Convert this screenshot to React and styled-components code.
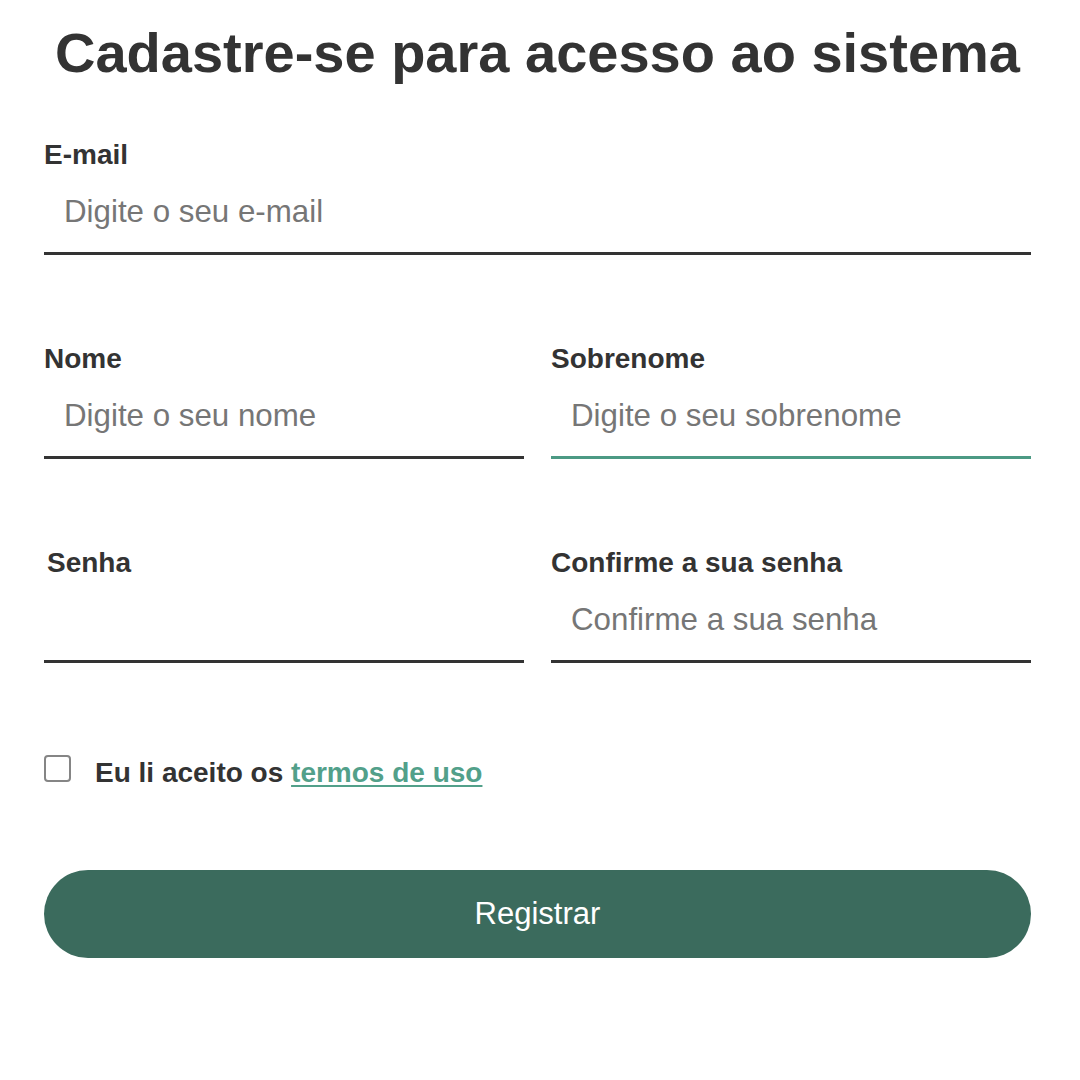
import React from "react";
import styled, { createGlobalStyle } from "styled-components";

const GlobalStyle = createGlobalStyle`
  body {
    margin: 0;
    background: #ffffff;
    font-family: "Liberation Sans", Arial, sans-serif;
  }
`;

const App = () => {
  return (
    <>
      <GlobalStyle />
      <Wrapper>
        <Title>Cadastre-se para acesso ao sistema</Title>
        <Form onSubmit={(e) => e.preventDefault()}>
          <Field>
            <Label htmlFor="email">E-mail</Label>
            <Input id="email" type="email" placeholder="Digite o seu e-mail" />
          </Field>

          <Row>
            <Field>
              <Label htmlFor="nome">Nome</Label>
              <Input id="nome" type="text" placeholder="Digite o seu nome" />
            </Field>
            <Field>
              <Label htmlFor="sobrenome">Sobrenome</Label>
              <Input
                id="sobrenome"
                type="text"
                placeholder="Digite o seu sobrenome"
                $active
              />
            </Field>
          </Row>

          <Row>
            <Field>
              <Label htmlFor="senha" $shift={3}>
                Senha
              </Label>
              <Input id="senha" type="password" />
            </Field>
            <Field>
              <Label htmlFor="confirma">Confirme a sua senha</Label>
              <Input
                id="confirma"
                type="password"
                placeholder="Confirme a sua senha"
              />
            </Field>
          </Row>

          <Terms>
            <Checkbox type="checkbox" id="termos" />
            <TermsText htmlFor="termos">
              Eu li aceito os <TermsLink href="#">termos de uso</TermsLink>
            </TermsText>
          </Terms>

          <Button type="submit">Registrar</Button>
        </Form>
      </Wrapper>
    </>
  );
};

const Wrapper = styled.main`
  width: 987px;
  margin-left: 44px;
  padding-top: 20px;
  color: #333333;
`;

const Title = styled.h1`
  margin: 0 0 53px;
  font-size: 56px;
  line-height: 66px;
  font-weight: 700;
  text-align: center;
  white-space: nowrap;
  color: #333333;
`;

const Form = styled.form`
  display: flex;
  flex-direction: column;
  gap: 88px;
`;

const Row = styled.div`
  display: grid;
  grid-template-columns: 1fr 1fr;
  column-gap: 27px;
`;

const Field = styled.div`
  display: flex;
  flex-direction: column;
`;

const Label = styled.label`
  display: block;
  font-size: 28px;
  line-height: 32px;
  font-weight: 700;
  color: #333333;
  padding-left: ${({ $shift }) => $shift || 0}px;
`;

const Input = styled.input`
  margin-top: 7px;
  padding: 16px 20px 22px;
  border: none;
  border-bottom: 3px solid ${({ $active }) => ($active ? "#4c9a84" : "#333333")};
  outline: none;
  font-family: "Liberation Sans", Arial, sans-serif;
  font-size: 31.3px;
  line-height: 36px;
  color: #333333;
  background: transparent;

  &::placeholder {
    color: #767676;
  }
`;

const Terms = styled.div`
  display: flex;
  align-items: flex-start;
  gap: 24px;
  margin-top: 4px;
`;

const Checkbox = styled.input`
  appearance: none;
  margin: 0;
  width: 27px;
  height: 27px;
  border: 2px solid #858585;
  border-radius: 4px;
  background: #ffffff;
  flex-shrink: 0;
`;

const TermsText = styled.label`
  padding-top: 2px;
  font-size: 28px;
  line-height: 32px;
  font-weight: 700;
  color: #333333;
`;

const TermsLink = styled.a`
  color: #52a08a;
  text-decoration: underline;
  text-underline-offset: 3px;
`;

const Button = styled.button`
  margin-top: -7px;
  height: 88px;
  border: none;
  border-radius: 44px;
  background: #3b6b5d;
  color: #ffffff;
  font-family: "Liberation Sans", Arial, sans-serif;
  font-size: 31px;
  cursor: pointer;
`;

export default App;
